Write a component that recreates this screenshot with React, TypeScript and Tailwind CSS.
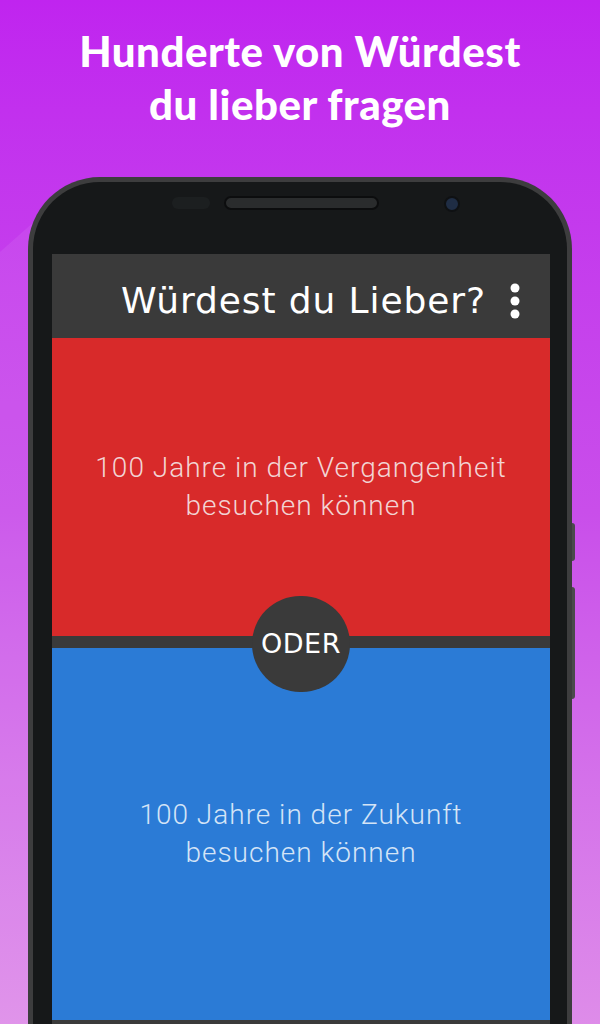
// Promo screenshot: headline over a phone mock showing the "Würdest du Lieber?" app
export default function App() {
  return (
    <div className="relative w-[600px] h-[1024px] overflow-hidden bg-gradient-to-b from-[#c024ef] via-[#c94eea] to-[#de8ce9]">
      {/* faint light wedge at the left, running in behind the phone */}
      <svg className="absolute inset-0" width="600" height="1024" viewBox="0 0 600 1024">
        <polygon points="0,252 70,190 70,1024 0,1024" fill="#ffffff" opacity="0.07" />
      </svg>

      <div className="relative">
        <h1 className="pt-[25px] text-center text-white font-['Lato',sans-serif] font-black text-[42px] leading-[53px] tracking-[0.5px]">
          Hunderte von Würdest
          <br />
          du lieber fragen
        </h1>

        {/* phone */}
        <div className="relative ml-[28px] mt-[46px] w-[544px]">
          <div className="rounded-t-[72px] bg-[#3d3d3e] px-[5px] pt-[5px]">
            <div className="rounded-t-[67px] bg-[#161819] pl-[19px] pr-[17px]">
              <div className="relative h-[72px]">
                <div className="absolute left-[120px] top-[15px] w-[38px] h-[12px] rounded-full bg-[#1c1f20]" />
                <div className="mx-auto pt-[14px] w-[155px]">
                  <div className="h-[14px] rounded-full border-2 border-[#0c0d0e] bg-[#2a2c2d]" />
                </div>
                <div className="absolute left-[392px] top-[14px] w-[16px] h-[16px] rounded-full bg-[#1f2d44] border-2 border-[#0f1113]" />
              </div>

              {/* screen */}
              <div className="relative bg-[#3a3a3a] font-['Roboto',sans-serif]">
                <div className="h-[84px] pt-[9px] flex items-center justify-end pr-[30px] gap-[24px]">
                  <span className="text-white text-[36px] font-['DejaVu_Sans',sans-serif] tracking-[0.9px]">
                    Würdest du Lieber?
                  </span>
                  <svg width="10" height="36" viewBox="0 0 10 36">
                    <circle cx="5" cy="5" r="4.5" fill="#ffffff" />
                    <circle cx="5" cy="18" r="4.5" fill="#ffffff" />
                    <circle cx="5" cy="31" r="4.5" fill="#ffffff" />
                  </svg>
                </div>
                <div className="h-[298px] bg-[#d82a2a] flex items-center justify-center text-center text-[28px] leading-[38px] tracking-[1px] font-light text-[#f2d4d4]">
                  <p>
                    100 Jahre in der Vergangenheit
                    <br />
                    besuchen können
                  </p>
                </div>
                <div className="h-[12px]" />
                <div className="h-[372px] bg-[#2b7bd6] flex items-center justify-center text-center text-[28px] leading-[38px] tracking-[1px] font-light text-[#d4e4f6]">
                  <p>
                    100 Jahre in der Zukunft
                    <br />
                    besuchen können
                  </p>
                </div>
                <div className="h-[6px]" />

                <div className="absolute left-[200px] top-[342px] w-[98px] h-[96px] rounded-full bg-[#3a3a3a] flex items-center justify-center">
                  <span className="text-white text-[27px] font-['DejaVu_Sans',sans-serif] tracking-[0.5px]">ODER</span>
                </div>
              </div>
            </div>
          </div>

          {/* side buttons */}
          <div className="absolute right-[-3px] top-[346px] w-[3px] h-[38px] rounded-r bg-[#4a4a4c]" />
          <div className="absolute right-[-3px] top-[410px] w-[3px] h-[112px] rounded-r bg-[#4a4a4c]" />
        </div>
      </div>
    </div>
  );
}
